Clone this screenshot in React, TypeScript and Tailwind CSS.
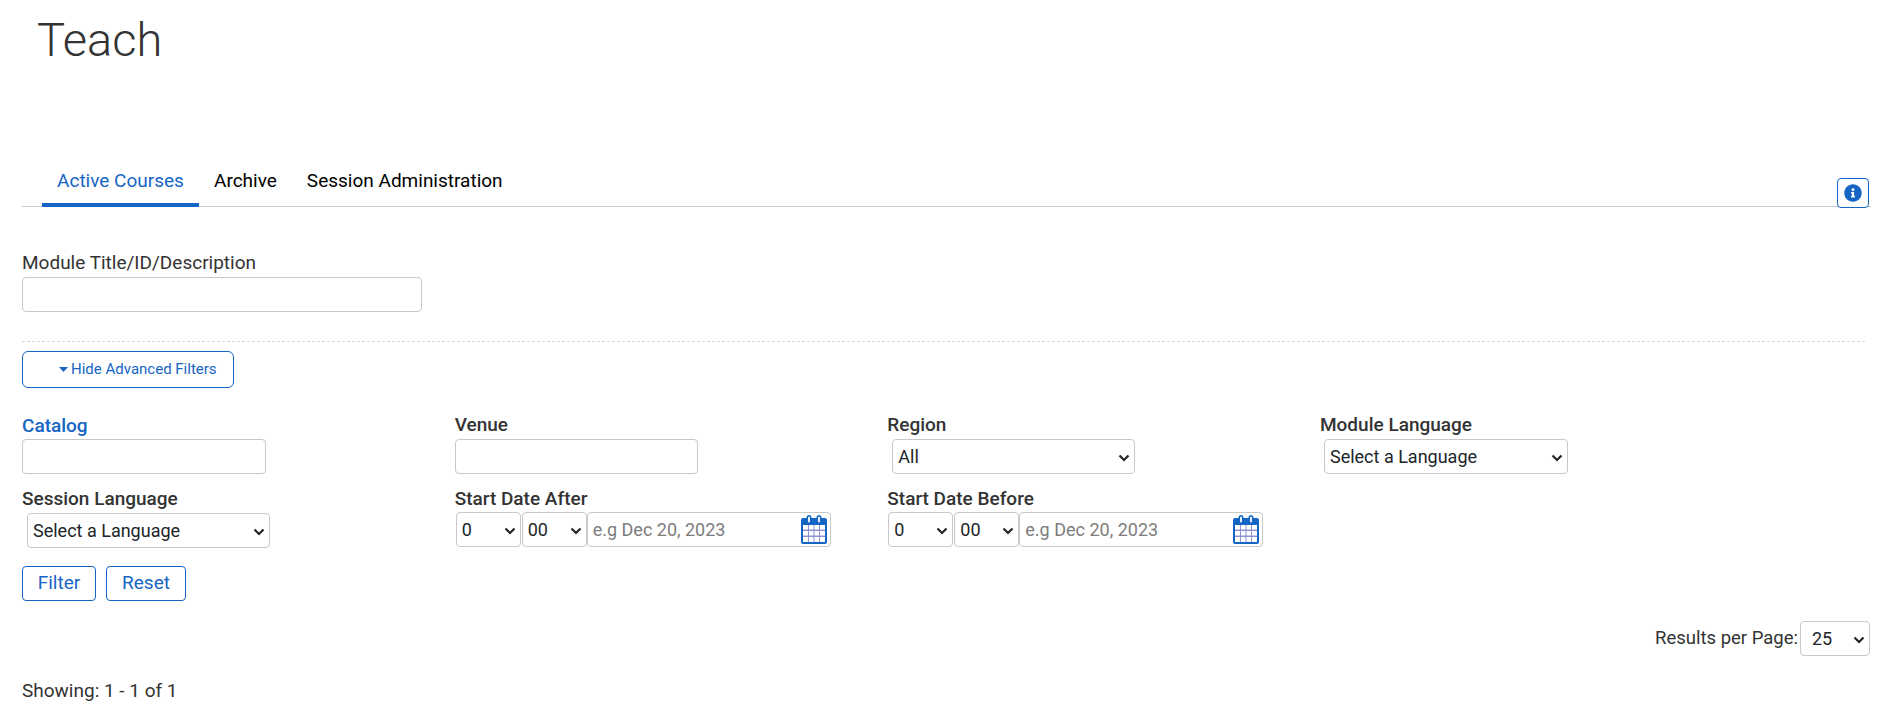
const inputCls = 'h-[35px] border border-[#c8c8c8] rounded-[4px] bg-white outline-none'
const labelCls = 'block text-[19px] leading-[24px] font-medium text-[#333333]'

function Select({ value, className, pad = 'pl-[5px]' }: { value: string; className: string; pad?: string }) {
  return (
    <div className={`relative h-[35px] shrink-0 ${className}`}>
      <select className={`appearance-none w-full h-full border border-[#c8c8c8] rounded-[4px] bg-white text-[#212529] text-[18px] outline-none ${pad}`}>
        <option>{value}</option>
      </select>
      <svg width="12" height="8" viewBox="0 0 12 8" className="absolute right-[5px] top-[15px] pointer-events-none">
        <path d="M1.500 1.500L6 6l4.500-4.500" fill="none" stroke="#212529" strokeWidth="2.200" />
      </svg>
    </div>
  )
}

function CalendarIcon() {
  return (
    <svg width="26" height="29" viewBox="0 0 26 29" className="shrink-0">
      <path
        fill="#1565c4"
        d="M2 3h3.500V2.500a2.500 2.500 0 0 1 5 0V3h5v-.5a2.500 2.500 0 0 1 5 0V3H24a2 2 0 0 1 2 2v22a2 2 0 0 1-2 2H2a2 2 0 0 1-2-2V5a2 2 0 0 1 2-2z"
      />
      <rect x="7" y="1.500" width="2" height="6" rx="1" fill="#e8eefa" />
      <rect x="17" y="1.500" width="2" height="6" rx="1" fill="#e8eefa" />
      <rect x="2" y="10" width="22" height="17" fill="#8f93d6" />
      <path
        fill="#fff"
        d="M2 10h5v4.500H2zM8 10h4.500v4.500H8zM13.500 10H18v4.500h-4.500zM19 10h5v4.500h-5zM2 16h5v4.500H2zM8 16h4.500v4.500H8zM13.500 16H18v4.500h-4.500zM19 16h5v4.500h-5zM2 22h5v5H2zM8 22h4.500v5H8zM13.500 22H18v5h-4.500zM19 22h5v5h-5z"
      />
    </svg>
  )
}

function DateField({ label }: { label: string }) {
  return (
    <div>
      <label className={labelCls}>{label}</label>
      <div className="flex items-center ml-[1px] mt-[1px]">
        <Select value="0" className="w-[65px]" />
        <Select value="00" className="w-[65px] ml-[1px]" />
        <div className="h-[35px] w-[244px] border border-[#c8c8c8] rounded-[4px] flex items-center justify-between pl-[5px] pr-[3px]">
          <span className="text-[18px] text-[#7d7d7d]">e.g Dec 20, 2023</span>
          <CalendarIcon />
        </div>
      </div>
    </div>
  )
}

export default function App() {
  return (
    <div className="w-[1887px] h-[710px] overflow-hidden bg-white text-[#333333] font-['Roboto',sans-serif]">
      <h1 className="pl-[37px] pt-[8px] text-[47px] leading-[64px] font-light text-[#333333]">Teach</h1>

      <div className="mt-[95px] ml-[22px] mr-[16px] h-[40px] border-b border-[#c8c8c8] flex justify-between">
        <div className="flex pl-[20px] text-[19px]">
          <a className="h-[40px] w-[157px] flex items-start justify-center border-b-4 border-[#1565c4] text-[#1565c4]">
            Active Courses
          </a>
          <a className="pl-[15px] text-black">Archive</a>
          <a className="pl-[30px] text-black">Session Administration</a>
        </div>
        <button className="h-[30px] w-[32px] mr-[2px] mt-[11px] border border-[#1565c4] rounded-[4px] bg-white flex items-center justify-center">
          <svg width="18" height="18" viewBox="0 0 512 512">
            <path
              fill="#1565c4"
              d="M256 8C119 8 8 119 8 256s111 248 248 248 248-111 248-248S393 8 256 8zm0 110c23 0 42 19 42 42s-19 42-42 42-42-19-42-42 19-42 42-42zm56 254c0 7-5 12-12 12h-88c-7 0-12-5-12-12v-24c0-7 5-12 12-12h12v-64h-12c-7 0-12-5-12-12v-24c0-7 5-12 12-12h64c7 0 12 5 12 12v100h12c7 0 12 5 12 12v24z"
            />
          </svg>
        </button>
      </div>

      <div className="px-[22px]">
        <label className="block mt-[44px] text-[19px] leading-[24px] text-[#333333]">Module Title/ID/Description</label>
        <input className={`${inputCls} block w-[400px] mt-[2px]`} />

        <div className="mt-[29px] border-t border-dashed border-[#d8d8d8]" />

        <button className="mt-[9px] h-[37px] w-[212px] border border-[#1565c4] rounded-[6px] bg-white text-[#1565c4] text-[15px] flex items-center pl-[36px]">
          <svg width="9" height="5" viewBox="0 0 9 5" className="mr-[3px]">
            <path d="M0 0h9L4.500 5z" fill="#1565c4" />
          </svg>
          Hide Advanced Filters
        </button>

        <div className="grid grid-cols-[repeat(4,432.67px)] mt-[25px]">
          <div>
            <label className="block mt-[1px] text-[19px] leading-[24px] font-medium text-[#1565c4]">Catalog</label>
            <input className={`${inputCls} block w-[244px] mt-[1px]`} />
          </div>
          <div>
            <label className={labelCls}>Venue</label>
            <input className={`${inputCls} block w-[243px] mt-[2px]`} />
          </div>
          <div>
            <label className={labelCls}>Region</label>
            <Select value="All" className="w-[243px] ml-[5px] mt-[2px]" />
          </div>
          <div>
            <label className={labelCls}>Module Language</label>
            <Select value="Select a Language" className="w-[244px] ml-[4px] mt-[2px]" />
          </div>

          <div className="mt-[13px]">
            <label className={labelCls}>Session Language</label>
            <Select value="Select a Language" className="w-[243px] ml-[5px] mt-[2px]" />
          </div>
          <div className="mt-[13px]">
            <DateField label="Start Date After" />
          </div>
          <div className="mt-[13px]">
            <DateField label="Start Date Before" />
          </div>
        </div>

        <div className="flex gap-[10px] mt-[18px]">
          <button className="h-[35px] w-[74px] border border-[#1565c4] rounded-[4px] text-[19px] text-[#1565c4]">Filter</button>
          <button className="h-[35px] w-[80px] border border-[#1565c4] rounded-[4px] text-[19px] text-[#1565c4]">Reset</button>
        </div>

        <div className="flex items-center justify-end mt-[20px] mr-[-5px] text-[18.500px]">
          <span className="mr-[2px]">Results per Page:</span>
          <Select value="25" className="w-[70px]" pad="pl-[11px]" />
        </div>

        <p className="mt-[23px] text-[19px] leading-[24px] text-[#333333]">Showing: 1 - 1 of 1</p>
      </div>
    </div>
  )
}
